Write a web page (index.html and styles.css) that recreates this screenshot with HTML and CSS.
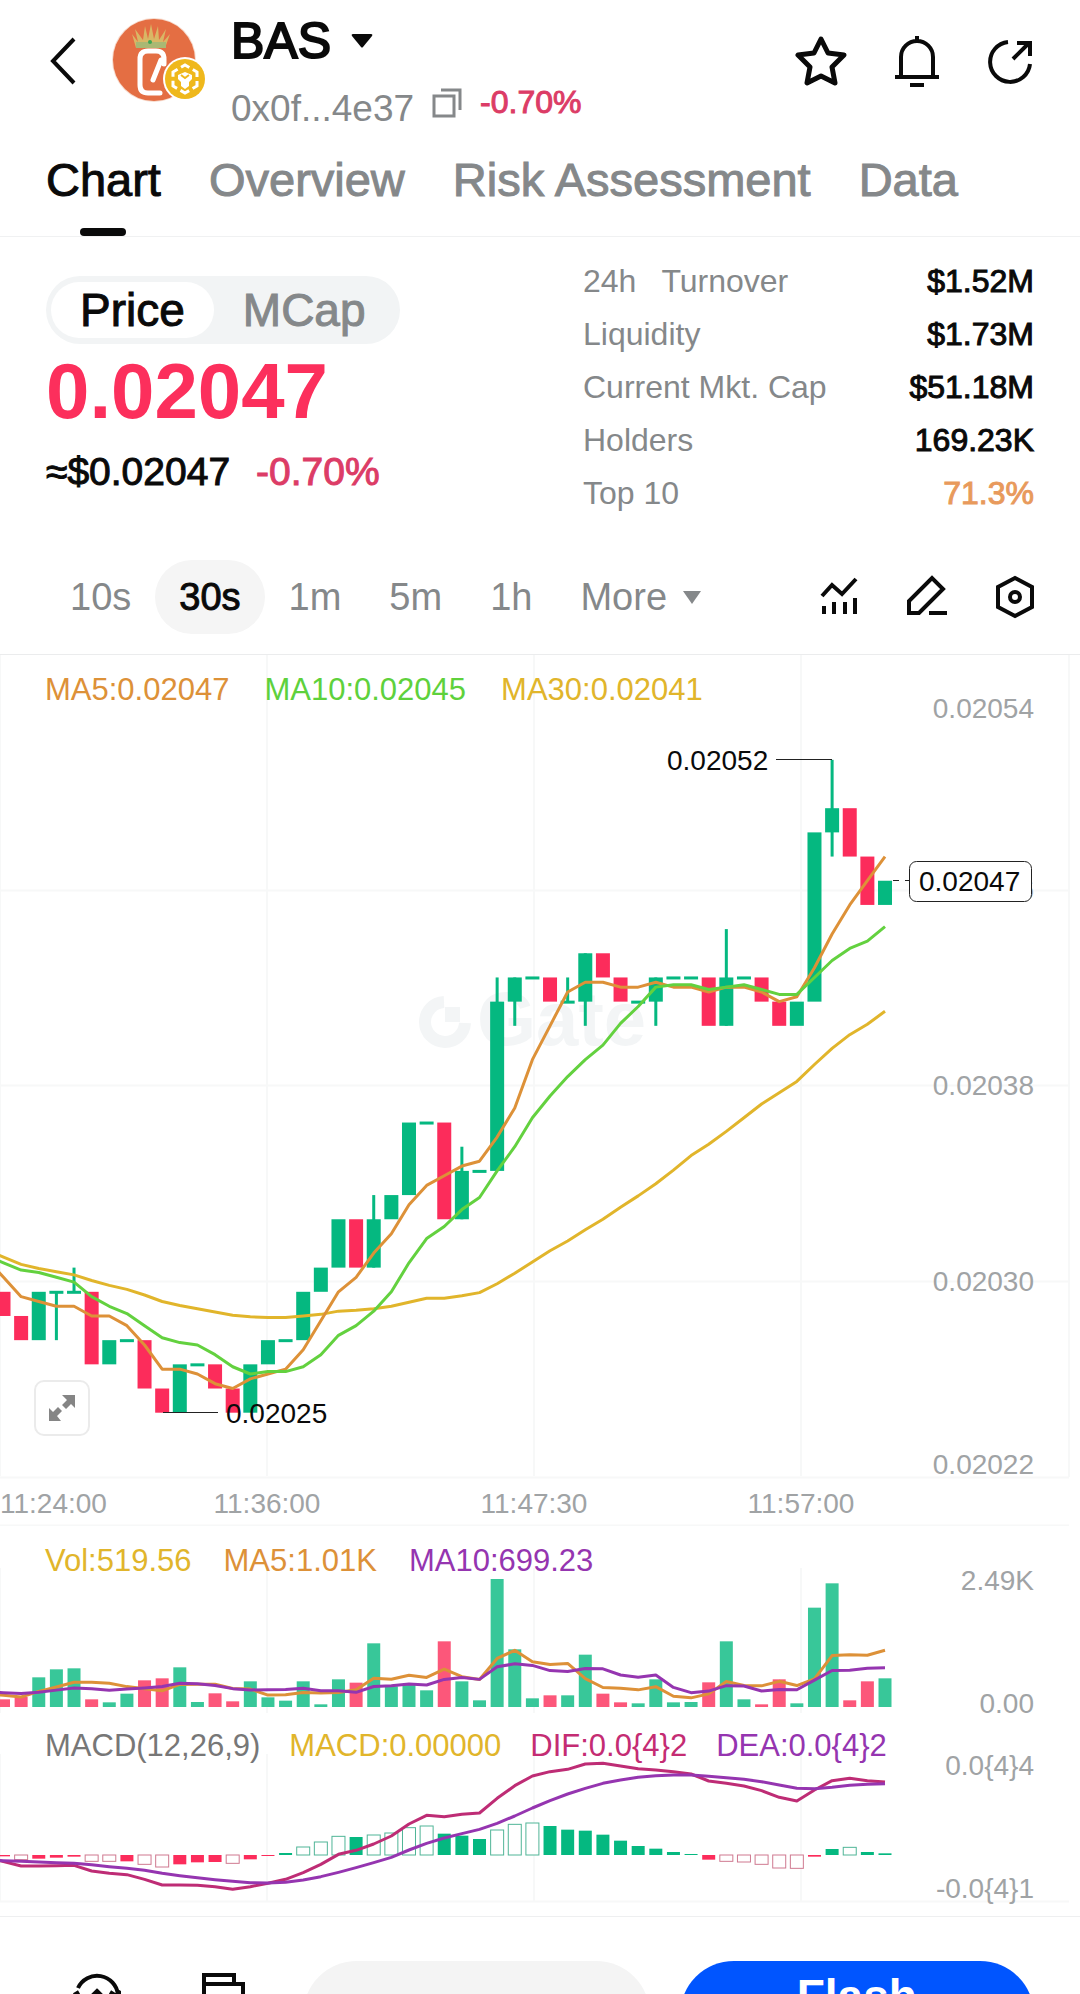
FILE: index.html
```html
<!DOCTYPE html>
<html lang="en">
<head>
    <meta charset="UTF-8">
    <meta name="viewport" content="width=device-width, initial-scale=1.0">
    <title>BAS - Chart</title>
    <link rel="stylesheet" href="styles.css">
</head>
<body>
<div class="page">
    <header class="header">
        <button class="icon-btn back header-side" aria-label="Back">
            <svg width="30" height="50" viewBox="0 0 30 50" fill="none" stroke="#0a0a0a" stroke-width="4"><path d="M28 3 7 25l21 22"/></svg>
        </button>
        <div class="avatar header-side">
            <svg width="96" height="88" viewBox="0 0 96 88">
                <circle cx="43" cy="43" r="42" fill="#f7dccf"/>
                <circle cx="43" cy="43" r="41" fill="#e46e43"/>
                <path d="M25 31 21 17l6 8-3-13 8 11 2-14 3 13 3-15 3 15 4-13 1 14 7-11-3 13 7-8-5 14Z" fill="#d9b765"/>
                <path d="M25 25h30v6H25z" fill="#a9b873"/>
                <circle cx="39" cy="25" r="2" fill="#3da653"/>
                <path d="M53 47v-5q0-8-8-8h-8q-8 0-8 8v26q0 8 8 8h12M50 43 42 63" fill="none" stroke="#fff" stroke-width="5" stroke-linecap="round"/>
                <circle cx="74" cy="62" r="22" fill="#fff"/>
                <circle cx="74" cy="62" r="20" fill="#efb81c"/>
                <path d="m74 48 12 7v14l-12 7-12-7V55Z" fill="none" stroke="#fff" stroke-width="3" stroke-dasharray="10 4" stroke-dashoffset="5"/>
                <path d="m67 58 7-3 7 3v4l-3 3v4l-4 3-4-3v-4l-3-3Z" fill="#fff"/>
                <path d="m70 58 4 3 4-3" fill="none" stroke="#efb81c" stroke-width="2"/>
            </svg>
        </div>
        <div class="token">
            <button class="token-name">BAS
                <svg width="22" height="16" viewBox="0 0 22 16"><path d="M2 1h18q2 0 1 2l-9 11q-1 1-2 0L1 3Q0 1 2 1Z" fill="#0a0a0a"/></svg>
            </button>
            <div class="token-meta">
                <span class="address">0x0f...4e37</span>
                <button class="icon-btn copy" aria-label="Copy address">
                    <svg width="30" height="30" viewBox="0 0 30 30" fill="none" stroke="#85888a" stroke-width="3"><path d="M2 8h20v20H2zM9 2h19v20"/></svg>
                </button>
                <span class="header-change">-0.70%</span>
            </div>
        </div>
        <div class="actions header-side">
            <button class="icon-btn" aria-label="Favourite">
                <svg width="52" height="52" viewBox="0 0 52 52" fill="none" stroke="#0a0a0a" stroke-width="5" stroke-linejoin="round"><path d="m26 4 7 14 16 2-12 12 3 16-14-7-14 7 3-16L3 20l16-2Z"/></svg>
            </button>
            <button class="icon-btn" aria-label="Alerts">
                <svg width="44" height="52" viewBox="0 0 44 52" fill="none" stroke="#0a0a0a" stroke-width="4"><path d="M22 1v5M6 41V22a16 16 0 0 1 32 0v19M0 42h44M15 50h14"/></svg>
            </button>
            <button class="icon-btn" aria-label="Share">
                <svg width="46" height="52" viewBox="0 0 46 52" fill="none" stroke="#0a0a0a" stroke-width="4"><path d="M21 7a20 20 0 1 0 22 22M26 24 42 8M30 8h13v13"/></svg>
            </button>
        </div>
    </header>

    <nav class="tabs">
        <a href="#chart" class="tab active">Chart</a>
        <a href="#overview" class="tab">Overview</a>
        <a href="#risk" class="tab">Risk Assessment</a>
        <a href="#data" class="tab">Data</a>
    </nav>

    <section class="summary">
        <div class="quote">
            <div class="toggle">
                <button class="toggle-btn active">Price</button>
                <button class="toggle-btn">MCap</button>
            </div>
            <div class="price">0.02047</div>
            <div class="sub-price"><span>≈$0.02047</span><span class="down">-0.70%</span></div>
        </div>
        <dl class="stats">
            <div class="stat"><dt><span>24h</span><span>Turnover</span></dt><dd>$1.52M</dd></div>
            <div class="stat"><dt>Liquidity</dt><dd>$1.73M</dd></div>
            <div class="stat"><dt>Current Mkt. Cap</dt><dd>$51.18M</dd></div>
            <div class="stat"><dt>Holders</dt><dd>169.23K</dd></div>
            <div class="stat"><dt>Top 10</dt><dd class="warn">71.3%</dd></div>
        </dl>
    </section>

    <div class="toolbar">
        <button class="range">10s</button>
        <button class="range active">30s</button>
        <button class="range">1m</button>
        <button class="range">5m</button>
        <button class="range">1h</button>
        <button class="range">More
            <svg width="18" height="13" viewBox="0 0 18 13"><path d="M0 0h18L9 13Z" fill="#85888a"/></svg>
        </button>
        <div class="tools">
            <button class="icon-btn" aria-label="Indicators">
                <svg width="38" height="44" viewBox="0 0 38 44" fill="none" stroke="#0a0a0a" stroke-width="4"><path d="m2 21 10-11 10 9L36 4M4 31v8M14 27v12M25 27v12M35 23v16"/></svg>
            </button>
            <button class="icon-btn" aria-label="Draw">
                <svg width="40" height="44" viewBox="0 0 40 44" fill="none" stroke="#0a0a0a" stroke-width="4"><path d="M2 38V26L25 3l11 11-24 24ZM22 38h18"/></svg>
            </button>
            <button class="icon-btn" aria-label="Settings">
                <svg width="38" height="44" viewBox="0 0 38 44" fill="none" stroke="#0a0a0a" stroke-width="4"><path d="m19 3 17 9v20l-17 9-17-9V12Z"/><circle cx="19" cy="22" r="5"/></svg>
            </button>
        </div>
    </div>

    <main class="charts" id="chart">
        <section class="panel">
            <svg id="priceChart" class="plot" viewBox="0 0 1080 871"></svg>
            <div class="legend">
                <span class="orange">MA5:0.02047</span>
                <span class="lime">MA10:0.02045</span>
                <span class="gold">MA30:0.02041</span>
            </div>
            <button class="expand" aria-label="Full screen">
                <svg width="28" height="28" viewBox="0 0 28 28" fill="#858585"><path d="M14 1h13v13l-4-4-5 5-4-4 5-5ZM1 14l4 4 5-5 4 4-5 5 4 5H1Z"/></svg>
            </button>
        </section>
        <section class="panel">
            <svg id="volumeChart" class="plot" viewBox="0 0 1080 192"></svg>
            <div class="legend volume-legend">
                <span class="gold">Vol:519.56</span>
                <span class="orange">MA5:1.01K</span>
                <span class="purple">MA10:699.23</span>
            </div>
        </section>
        <section class="panel">
            <svg id="macdChart" class="plot" viewBox="0 0 1080 198"></svg>
            <div class="legend macd-legend">
                <span class="grey">MACD(12,26,9)</span>
                <span class="gold">MACD:0.00000</span>
                <span class="pink">DIF:0.0{4}2</span>
                <span class="purple">DEA:0.0{4}2</span>
            </div>
        </section>
    </main>

    <footer class="footer">
        <button class="icon-btn" aria-label="Refresh">
            <svg width="48" height="48" viewBox="0 0 48 48" fill="none" stroke="#0a0a0a" stroke-width="4"><path d="M5 17a21 21 0 0 1 40 7M1 24l5-3M37 21l8 5 3-6M43 31a21 21 0 0 1-40-7"/><path d="m24 20 5 5-5 5-5-5Z" fill="#0a0a0a"/></svg>
        </button>
        <button class="icon-btn" aria-label="Orders">
            <svg width="44" height="48" viewBox="0 0 44 48" fill="none" stroke="#0a0a0a" stroke-width="4"><path d="M3 44V4h30v9M3 13h39v31H3"/></svg>
        </button>
        <button class="cta light" aria-label="Trade"></button>
        <button class="cta">Flash</button>
    </footer>
</div>

<script>
    // [open, close, high, low] in units of 0.00001 on top of 0.02000
    const candles = [
        [30,29],[29,28],[28,30],[30,30,30,28],[30,30,31,30],[30,27],[27,28],[28,28],[28,26],[26,25],
        [25,27],[27,27],[27,26],[26,25],[25,27],[27,28],[28,28],[28,30],[30,31],[31,33],
        [33,31],[31,33,34,31],[33,34],[34,37],[37,37],[37,33],[33,35,36,33],[35,35],[35,42,43,35],[42,43,43,41],
        [43,43],[43,42],[42,42,43,42],[42,44,44,41],[44,43],[43,42],[42,42],[42,43,43,41],[43,43],[43,43],
        [43,41],[41,43,45,41],[43,43],[43,42],[42,41],[41,42],[42,49],[49,50,52,48],[50,48],[48,46],[46,47]
    ];
    // closes before the first visible candle, needed by the averages
    const closeHistory = [37,35,34,34,34,34,33,33,33,32,31,30,29,29,29,28,28,29,29,30,31,31,32,32,33,32,31,31,30];

    const volumes = [23,30,89,113,116,23,14,40,80,86,119,15,41,17,77,29,19,77,8,83,73,191,62,68,50,197,77,20,384,173,26,
        35,35,157,40,14,11,83,14,15,74,197,23,8,83,11,298,371,20,77,86];
    const volumeHistory = [52,52,52,52,47,55,4,48,45];

    const macd = [-4,-14,-11,-8,-5,-19,-19,-19,-28,-36,-28,-22,-21,-25,-13,-1,6,24,39,56,54,60,66,82,87,64,58,48,75,92,96,
        87,76,73,61,43,27,19,9,2,-14,-19,-21,-28,-39,-40,-5,18,23,9,5];
    const hollow = [1,5,6,8,9,13,17,18,19,21,22,23,24,28,29,30,41,42,43,44,45,48];
    const dif = [425,438,438,437,436,453,460,464,478,495,495,496,500,508,500,490,478,458,433,403,391,372,348,312,286,290,283,279,235,197,168,
        155,148,132,130,138,146,150,155,162,183,190,198,212,232,243,210,182,175,182,186];
    const dea = [422,424,426,428,430,434,440,445,451,460,467,473,479,484,488,489,487,480,470,457,443,428,412,390,370,354,341,328,310,288,264,
        242,222,205,190,180,172,167,165,165,169,173,178,185,195,205,206,202,196,193,191];

    const GREEN = '#05b880', RED = '#fc2c5b';
    const ORANGE = '#dd9138', LIME = '#63d13f', GOLD = '#e1b52b', PURPLE = '#9535b0', PINK = '#be2c75';
    const gridX = [0, 267, 534, 801];

    const x = i => 3.5 + i * 17.63;
    const priceY = p => 757.7 - (p - 25) * 24.18;

    function average(history, values, n) {
        const all = history.concat(values);
        return values.map((_, i) => {
            const end = history.length + i + 1;
            return all.slice(end - n, end).reduce((a, b) => a + b, 0) / n;
        });
    }

    function rect(cx, y, w, h, fill, extra = '') {
        return `<rect x="${cx - w / 2}" y="${y}" width="${w}" height="${h}" fill="${fill}" ${extra}/>`;
    }

    function line(x1, y1, x2, y2, cls) {
        return `<line x1="${x1}" y1="${y1}" x2="${x2}" y2="${y2}" class="${cls}"/>`;
    }

    // curve that leaves the left edge of the plot
    function curve(ys, color) {
        const points = ys.map((y, i) => `${x(i)},${y}`);
        points.unshift(`-14,${2 * ys[0] - ys[1]}`);
        return `<polyline points="${points.join(' ')}" fill="none" stroke="${color}" stroke-width="3" stroke-linejoin="round"/>`;
    }

    function text(tx, ty, str, cls) {
        return `<text x="${tx}" y="${ty}" class="${cls}">${str}</text>`;
    }

    function drawPrice() {
        let out = '';
        gridX.forEach(g => out += line(g, 0, g, 821, 'grid'));
        out += line(1069, 0, 1069, 822, 'grid');
        [235.5, 430.5, 626.5, 822.5, 870.5].forEach(y => out += line(0, y, 1069, y, 'grid'));

        // watermark
        out += '<path d="M444 347a20 20 0 1 0 21 21" class="mark-ring"/><path d="M445 352h15v15h-15z" class="mark"/>';
        out += text(477, 390, 'Gate', 'mark mark-text');

        [[63, '0.02054'], [244, '0.02046'], [440, '0.02038'], [636, '0.02030'], [819, '0.02022']]
            .forEach(([y, label]) => out += text(1034, y, label, 'axis end'));
        out += text(0, 858, '11:24:00', 'axis');
        ['11:36:00', '11:47:30', '11:57:00'].forEach((t, i) => out += text(gridX[i + 1], 858, t, 'axis middle'));

        candles.forEach(([o, c, h, l], i) => {
            const color = c < o ? RED : GREEN;
            const top = priceY(Math.max(o, c));
            if (h !== undefined) out += rect(x(i), priceY(h), 3, priceY(l) - priceY(h), color);
            out += o === c
                ? rect(x(i), top - 1, 14, 3, color)
                : rect(x(i), top, 14, Math.abs(c - o) * 24.18, color);
        });

        const closes = candles.map(c => c[1]);
        out += curve(average(closeHistory, closes, 30).map(priceY), GOLD);
        out += curve(average(closeHistory, closes, 5).map(priceY), ORANGE);
        out += curve(average(closeHistory, closes, 10).map(priceY), LIME);

        out += line(776, 104.5, 832, 104.5, 'pointer') + text(667, 115, '0.02052', 'callout');
        out += line(163, 757.5, 218, 757.5, 'pointer') + text(226, 768, '0.02025', 'callout');
        out += line(893, 225.5, 910, 225.5, 'pointer dashed');
        out += '<rect x="909.5" y="206.5" width="122" height="40" rx="7" class="tag"/>';
        out += text(919, 236, '0.02047', 'callout');
        document.getElementById('priceChart').innerHTML = out;
    }

    function drawVolume() {
        const y = v => 181 - v / 3;
        let out = '';
        gridX.forEach(g => out += line(g, 42, g, 187, 'grid'));
        volumes.forEach((v, i) => {
            const color = candles[i][1] < candles[i][0] ? '#fc577a' : '#38c799';
            out += rect(x(i), y(v), 13, v / 3, color);
        });
        out += curve(average(volumeHistory, volumes, 5).map(y), ORANGE);
        out += curve(average(volumeHistory, volumes, 10).map(y), PURPLE);
        out += text(1034, 64, '2.49K', 'axis end') + text(1034, 187, '0.00', 'axis end');
        document.getElementById('volumeChart').innerHTML = out;
    }

    function drawMacd() {
        let out = '';
        gridX.forEach(g => out += line(g, 36, g, 183, 'grid'));
        out += line(0, 183.5, 1069, 183.5, 'grid');
        macd.forEach((v, i) => {
            const color = v < 0 ? RED : GREEN;
            const h = Math.max(Math.abs(v) / 3, 1);
            const top = v < 0 ? 137 : 137 - h;
            out += hollow.includes(i)
                ? rect(x(i), top, 13, h, '#fff', `stroke="${v < 0 ? '#cf7990' : '#50b597'}"`)
                : rect(x(i), top, 13, h, color);
        });
        out += curve(dif.map(v => 2 + v / 3), PINK);
        out += curve(dea.map(v => 2 + v / 3), PURPLE);
        out += text(1034, 57, '0.0{4}4', 'axis end') + text(1034, 180, '-0.0{4}1', 'axis end');
        document.getElementById('macdChart').innerHTML = out;
    }

    drawPrice();
    drawVolume();
    drawMacd();
</script>
</body>
</html>
```
FILE: styles.css
```css
* {
    margin: 0;
    padding: 0;
    box-sizing: border-box;
}

body {
    font-family: "Liberation Sans", Arial, sans-serif;
    background: #fff;
    color: #0a0a0a;
}

button {
    font: inherit;
    color: inherit;
    background: none;
    border: none;
    cursor: pointer;
}

.page {
    display: flex;
    flex-direction: column;
    height: 100vh;
    overflow: hidden;
}

.page > * {
    flex-shrink: 0;
}

.icon-btn {
    display: flex;
    align-items: center;
    justify-content: center;
}

/* header */
.header {
    display: flex;
    align-items: stretch;
    padding: 13px 47px 0 46px;
}

.header-side {
    display: flex;
    align-items: center;
    padding-bottom: 26px;
}

.avatar {
    margin: 0 24px 0 35px;
}

.token {
    flex: 1;
}

.token-name {
    display: flex;
    align-items: center;
    gap: 20px;
    font-size: 50px;
    line-height: 56px;
    -webkit-text-stroke: 2px #0a0a0a;
}

.token-meta {
    display: flex;
    align-items: flex-start;
    margin-top: 15px;
}

.address {
    font-size: 37px;
    line-height: 50px;
    color: #85888a;
}

.copy {
    padding: 4px 18px 0;
}

.header-change {
    font-size: 32px;
    line-height: 36px;
    color: #dc3c66;
    -webkit-text-stroke: 1px #dc3c66;
}

.actions {
    gap: 48px;
}

/* tabs */
.tabs {
    display: flex;
    gap: 48px;
    padding: 20px 46px 0;
    border-bottom: 1px solid #f0f1f2;
}

.tab {
    position: relative;
    padding-bottom: 30px;
    font-size: 47px;
    line-height: 52px;
    color: #85888a;
    text-decoration: none;
    -webkit-text-stroke: 1px;
}

.tab.active {
    color: #0a0a0a;
}

.tab.active::after {
    content: "";
    position: absolute;
    left: 50%;
    bottom: 0;
    width: 46px;
    height: 8px;
    margin-left: -23px;
    border-radius: 4px;
    background: #0a0a0a;
}

/* summary */
.summary {
    display: flex;
    justify-content: space-between;
    padding: 0 46px;
}

.quote {
    padding-top: 39px;
}

.toggle {
    display: inline-flex;
    padding: 6px 5px;
    border-radius: 34px;
    background: #f2f4f5;
}

.toggle-btn {
    height: 56px;
    padding: 0 29px;
    border-radius: 28px;
    font-size: 46px;
    line-height: 56px;
    color: #85888a;
    -webkit-text-stroke: 1px;
}

.toggle-btn.active {
    background: #fff;
    color: #0a0a0a;
}

.price {
    margin-top: 5px;
    font-size: 78px;
    font-weight: bold;
    line-height: 84px;
    color: #fc2f5c;
}

.sub-price {
    display: flex;
    gap: 26px;
    margin-top: 17px;
    font-size: 39px;
    line-height: 44px;
    -webkit-text-stroke: 1px;
}

.down {
    color: #dc3c66;
}

.stats {
    width: 451px;
    padding-top: 18px;
    font-size: 32px;
    line-height: 53px;
}

.stat {
    display: flex;
    justify-content: space-between;
}

.stat dt {
    color: #85888a;
}

.stat dt span + span {
    margin-left: 25px;
}

.stat dd {
    -webkit-text-stroke: 1px;
}

.stat .warn {
    color: #e89a5c;
}

/* toolbar */
.toolbar {
    display: flex;
    align-items: center;
    padding: 40px 46px 20px;
    border-bottom: 1px solid #ebeced;
}

.range {
    display: flex;
    align-items: center;
    gap: 16px;
    height: 74px;
    padding: 0 24px;
    border-radius: 37px;
    font-size: 38px;
    color: #85888a;
}

.range.active {
    background: #f5f5f5;
    color: #0a0a0a;
    -webkit-text-stroke: 1px;
}

.tools {
    display: flex;
    gap: 49px;
    margin-left: auto;
}

/* charts: the legend shares the grid cell with its plot */
.panel {
    display: grid;
}

.plot,
.legend,
.expand {
    grid-area: 1 / 1;
}

.plot {
    display: block;
    width: 100%;
    overflow: hidden;
}

.legend {
    display: flex;
    align-self: start;
    gap: 35px;
    padding: 17px 45px 0;
    font-size: 31px;
    line-height: 36px;
}

.volume-legend {
    gap: 32px;
}

.macd-legend {
    gap: 29px;
    padding-top: 10px;
}

.expand {
    display: flex;
    align-items: center;
    justify-content: center;
    align-self: end;
    width: 56px;
    height: 56px;
    margin: 0 0 90px 34px;
    border: 2px solid #ebebeb;
    border-radius: 10px;
    background: #fff;
}

.orange { color: #dd9138; }
.lime { color: #5ed13c; }
.gold { color: #e1b52b; }
.purple { color: #9535b0; }
.pink { color: #c42c73; }
.grey { color: #777; }

.grid {
    stroke: #f7f8f8;
    stroke-width: 2;
}

.axis {
    font-size: 28px;
    fill: #a0a3a5;
}

.end { text-anchor: end; }
.middle { text-anchor: middle; }

.callout {
    font-size: 28px;
    fill: #0a0a0a;
}

.pointer {
    stroke: #222;
    stroke-width: 1;
}

.dashed {
    stroke-dasharray: 6 6;
}

.tag {
    fill: #fff;
    stroke: #222;
}

.mark {
    fill: #f3f5f6;
}

.mark-ring {
    fill: none;
    stroke: #f3f5f6;
    stroke-width: 12;
}

.mark-text {
    font-size: 76px;
    font-weight: bold;
}

/* footer */
.footer {
    display: flex;
    align-items: flex-start;
    padding: 44px 46px 0;
    border-top: 1px solid #eeeff0;
}

.footer .icon-btn {
    padding: 10px 0 0 27px;
}

.footer .icon-btn + .icon-btn {
    padding: 10px 58px 0 80px;
}

.cta {
    width: 353px;
    flex: 1 1 auto;
    height: 108px;
    padding-bottom: 38px;
    border-radius: 54px;
    background: #0055ff;
    color: #fff;
    font-size: 46px;
    font-weight: bold;
}

.cta.light {
    width: 345px;
    margin-right: 30px;
    background: #f4f4f4;
}
```
